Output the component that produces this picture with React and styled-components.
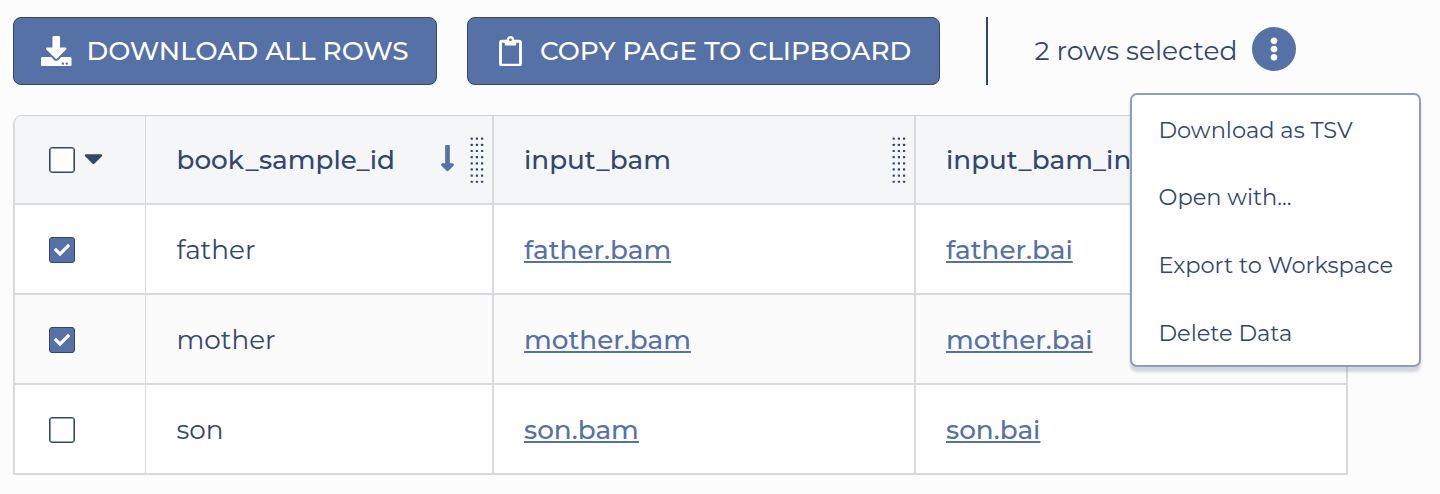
import React from 'react';
import styled, { createGlobalStyle } from 'styled-components';
import {
  FaDownload,
  FaRegClipboard,
  FaEllipsisV,
  FaCaretDown,
  FaLongArrowAltDown,
  FaCheck,
} from 'react-icons/fa';

const navy = '#33476e';
const blue = '#5671a6';
const line = '#d8dade';

const GlobalStyle = createGlobalStyle`
  * { box-sizing: border-box; }
  body {
    margin: 0;
    background: #fcfcfc;
    color: ${navy};
    font-family: Montserrat, Inter, sans-serif;
    font-size: 26.25px;
    overflow: hidden;
  }
`;

const Page = styled.main`
  height: 494px;
  padding: 17px 0 0 13px;
`;

const Toolbar = styled.div`
  display: flex;
  align-items: center;
  height: 67.5px;
`;

const ActionButton = styled.button`
  display: flex;
  align-items: center;
  width: ${(p) => p.$width}px;
  height: 100%;
  margin: 0 30px 0 0;
  padding: 0 0 0 ${(p) => p.$inset}px;
  gap: ${(p) => p.$gap}px;
  border: 1px solid ${navy};
  border-radius: 8px;
  background: ${blue};
  color: #fff;
  font: inherit;
  font-weight: 500;
  white-space: nowrap;

  svg {
    flex: none;
    height: 30.5px;
    width: ${(p) => p.$iconWidth}px;
  }
`;

const Label = styled.span`
  white-space: nowrap;
`;

const Selection = styled.div`
  position: relative;
  display: flex;
  align-items: center;
  height: 100%;
  margin-left: 15.5px;
  padding-left: 47px;
  border-left: 2px solid ${navy};
  font-size: 26.5px;
`;

const MoreButton = styled.button`
  display: grid;
  place-items: center;
  width: 44px;
  height: 44px;
  margin: 0 0 4px 15px;
  padding: 0;
  border: 0;
  border-radius: 50%;
  background: ${blue};
  color: #fff;
  font-size: 24px;
`;

const Menu = styled.ul`
  position: absolute;
  z-index: 1;
  top: 76px;
  left: 142.5px;
  width: 291px;
  height: 274px;
  margin: 0;
  padding: 1px 0 0;
  list-style: none;
  border: 2px solid #8f9dbb;
  border-radius: 7px;
  background: #fff;
  box-shadow: 0 5px 3px rgba(52, 66, 100, 0.2);
`;

const MenuItem = styled.li`
  display: flex;
  align-items: center;
  height: 67.6px;
  padding-left: 26.5px;
  font-size: 22.5px;
`;

const Table = styled.div`
  display: grid;
  grid-template-columns: 131px 348px 422px 430px;
  grid-template-rows: 89px 90px 90px 88px;
  width: 1335px;
  margin-top: 30.5px;
  border: 2px solid ${line};
  border-top: 1px solid #cdd1d7;
  border-radius: 9px 0 0 0;
  overflow: hidden;
`;

const Cell = styled.div`
  display: flex;
  align-items: center;
  padding-top: ${(p) => (p.$header ? 0 : p.$bottom ? 1 : 2)}px;
  padding-left: ${(p) => (p.$first ? 34 : p.$name ? 30.5 : 30)}px;
  border-right: ${(p) => (p.$last ? 0 : p.$first ? 1 : 2)}px solid ${line};
  border-bottom: ${(p) => (p.$bottom ? 0 : 2)}px solid ${line};
  background: ${(p) => (p.$header ? '#f4f6f8' : p.$striped ? '#fbfbfb' : '#fff')};
  font-weight: ${(p) => (p.$header ? 500 : 400)};
  overflow: hidden;
`;

const Checkbox = styled.span`
  display: grid;
  place-items: center;
  flex: none;
  width: 26px;
  height: 26px;
  border: 1px solid ${navy};
  border-radius: 3px;
  background: ${(p) => (p.$checked ? blue : '#fff')};
  box-shadow: inset 0 0 0 ${(p) => (p.$checked ? 0 : 0.6)}px ${navy};
  color: #fff;
  font-size: 16px;
`;

const Caret = styled(FaCaretDown)`
  width: 19px;
  height: 30px;
  margin: 0 0 3px 9px;
`;

const HeaderTools = styled.span`
  display: flex;
  align-items: center;
  margin-left: auto;
  padding-right: 8px;
  gap: 15px;
`;

const SortArrow = styled(FaLongArrowAltDown)`
  width: 15px;
  height: 30px;
  margin-bottom: 3px;
  color: ${blue};
`;

const Link = styled.a`
  color: ${blue};
  font-weight: 500;
  text-decoration: underline;
  text-decoration-thickness: 2px;
  text-underline-offset: 2px;
  text-decoration-skip-ink: none;
`;

function Grip() {
  const dots = [];
  for (let r = 0; r < 8; r += 1) {
    for (let c = 0; c < 3; c += 1) {
      dots.push(
        <rect key={`${r}-${c}`} x={0.6 + c * 5.2} y={0.6 + r * 6.15} width="2.2" height="2.2" rx="0.5" />,
      );
    }
  }
  return (
    <svg width="14" height="46" fill={navy} aria-hidden="true">
      {dots}
    </svg>
  );
}

const rows = [
  { id: 'father', bam: 'father.bam', bai: 'father.bai', checked: true },
  { id: 'mother', bam: 'mother.bam', bai: 'mother.bai', checked: true },
  { id: 'son', bam: 'son.bam', bai: 'son.bai', checked: false },
];

const menuItems = ['Download as TSV', 'Open with...', 'Export to Workspace', 'Delete Data'];

export default function App() {
  return (
    <>
      <GlobalStyle />
      <Page>
        <Toolbar>
          <ActionButton $width={424} $inset={27} $gap={15} $iconWidth={30.5}>
            <FaDownload />
            <Label>DOWNLOAD ALL ROWS</Label>
          </ActionButton>
          <ActionButton $width={473} $inset={31} $gap={18} $iconWidth={23}>
            <FaRegClipboard />
            <Label>COPY PAGE TO CLIPBOARD</Label>
          </ActionButton>
          <Selection>
            <Label>2 rows selected</Label>
            <MoreButton aria-label="More actions">
              <FaEllipsisV />
            </MoreButton>
            <Menu>
              {menuItems.map((text) => (
                <MenuItem key={text}>{text}</MenuItem>
              ))}
            </Menu>
          </Selection>
        </Toolbar>
        <Table>
          <Cell $header $first>
            <Checkbox />
            <Caret />
          </Cell>
          <Cell $header $name>
            <Label>book_sample_id</Label>
            <HeaderTools>
              <SortArrow />
              <Grip />
            </HeaderTools>
          </Cell>
          <Cell $header>
            <Label>input_bam</Label>
            <HeaderTools>
              <Grip />
            </HeaderTools>
          </Cell>
          <Cell $header $last>
            <Label>input_bam_index</Label>
          </Cell>
          {rows.map((row, i) => {
            const shared = { $striped: i % 2 === 1, $bottom: i === rows.length - 1 };
            return (
              <React.Fragment key={row.id}>
                <Cell {...shared} $first>
                  <Checkbox $checked={row.checked}>{row.checked && <FaCheck />}</Checkbox>
                </Cell>
                <Cell {...shared} $name>
                  <Label>{row.id}</Label>
                </Cell>
                <Cell {...shared}>
                  <Link>{row.bam}</Link>
                </Cell>
                <Cell {...shared} $last>
                  <Link>{row.bai}</Link>
                </Cell>
              </React.Fragment>
            );
          })}
        </Table>
      </Page>
    </>
  );
}
